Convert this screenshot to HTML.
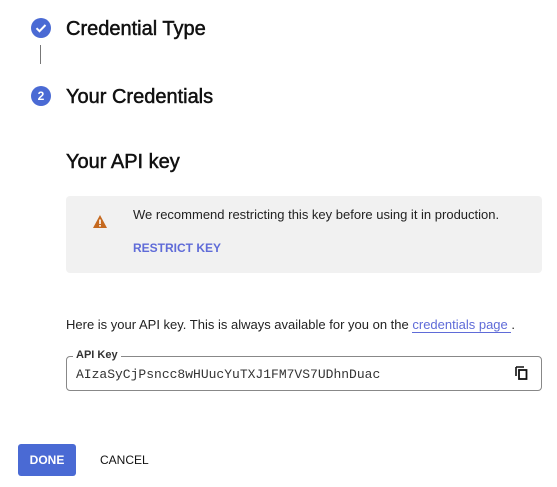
<!DOCTYPE html>
<html><head><style>
body{margin:0;width:557px;height:487px;background:#fff;font-family:"Liberation Sans",Arial,sans-serif;color:#202124;position:relative;overflow:hidden}
.a{position:absolute}
.circ{width:20px;height:20px;border-radius:50%;background:#4a6ad4;color:#fff;font-size:12px;font-weight:bold;text-align:center;line-height:20px}
.t{font-size:20px;color:#111;-webkit-text-stroke:0.5px #111}
</style></head><body>
<div class="a circ" style="left:31px;top:18px"><svg width="20" height="20" viewBox="0 0 20 20"><path d="M5.5 10.2l3 3 6-6.2" stroke="#fff" stroke-width="2" fill="none"/></svg></div>
<div class="a t" style="left:66px;top:18px">Credential Type</div>
<div class="a" style="left:40px;top:45px;width:1px;height:19px;background:#777"></div>
<div class="a circ" style="left:31px;top:86px">2</div>
<div class="a t" style="left:66px;top:86px">Your Credentials</div>
<div class="a t" style="left:66px;top:151px">Your API key</div>
<div class="a" style="left:66px;top:196px;width:476px;height:77px;background:#f1f1f1;border-radius:4px"></div>
<svg class="a" style="left:92px;top:214px" width="16" height="15" viewBox="0 0 16 15"><path d="M8 1L15 14H1Z" fill="#c5691f"/><rect x="7.2" y="5.5" width="1.6" height="4.5" fill="#fff"/><rect x="7.2" y="11" width="1.6" height="1.6" fill="#fff"/></svg>
<div class="a" style="left:133px;top:207px;font-size:13px;color:#222">We recommend restricting this key before using it in production.</div>
<div class="a" style="left:133px;top:241px;font-size:12px;font-weight:bold;color:#5f6bd8">RESTRICT KEY</div>
<div class="a" style="left:66px;top:317px;font-size:13px;color:#222">Here is your API key. This is always available for you on the <span style="color:#5f6bd8;border-bottom:1px solid #5f6bd8">credentials page </span>.</div>
<div class="a" style="left:66px;top:356px;width:474px;height:33px;border:1px solid #888;border-radius:4px"></div>
<div class="a" style="left:73px;top:349px;background:#fff;padding:0 3px;font-size:11px;font-weight:bold;color:#333">API Key</div>
<div class="a" style="left:76px;top:367px;font-family:'Liberation Mono',monospace;font-size:13px;color:#333">AIzaSyCjPsncc8wHUucYuTXJ1FM7VS7UDhnDuac</div>
<svg class="a" style="left:515px;top:366px" width="13" height="14" viewBox="0 0 13 14"><path d="M1 1h8M1 1v9" stroke="#111" stroke-width="1.6" fill="none"/><rect x="4" y="4" width="7.5" height="9" stroke="#111" stroke-width="1.8" fill="none"/></svg>
<div class="a" style="left:18px;top:444px;width:58px;height:32px;background:#4a6ad4;border-radius:3px;color:#fff;font-size:12px;font-weight:bold;text-align:center;line-height:32px">DONE</div>
<div class="a" style="left:100px;top:453px;font-size:12px;font-weight:500;color:#111">CANCEL</div>
</body></html>
